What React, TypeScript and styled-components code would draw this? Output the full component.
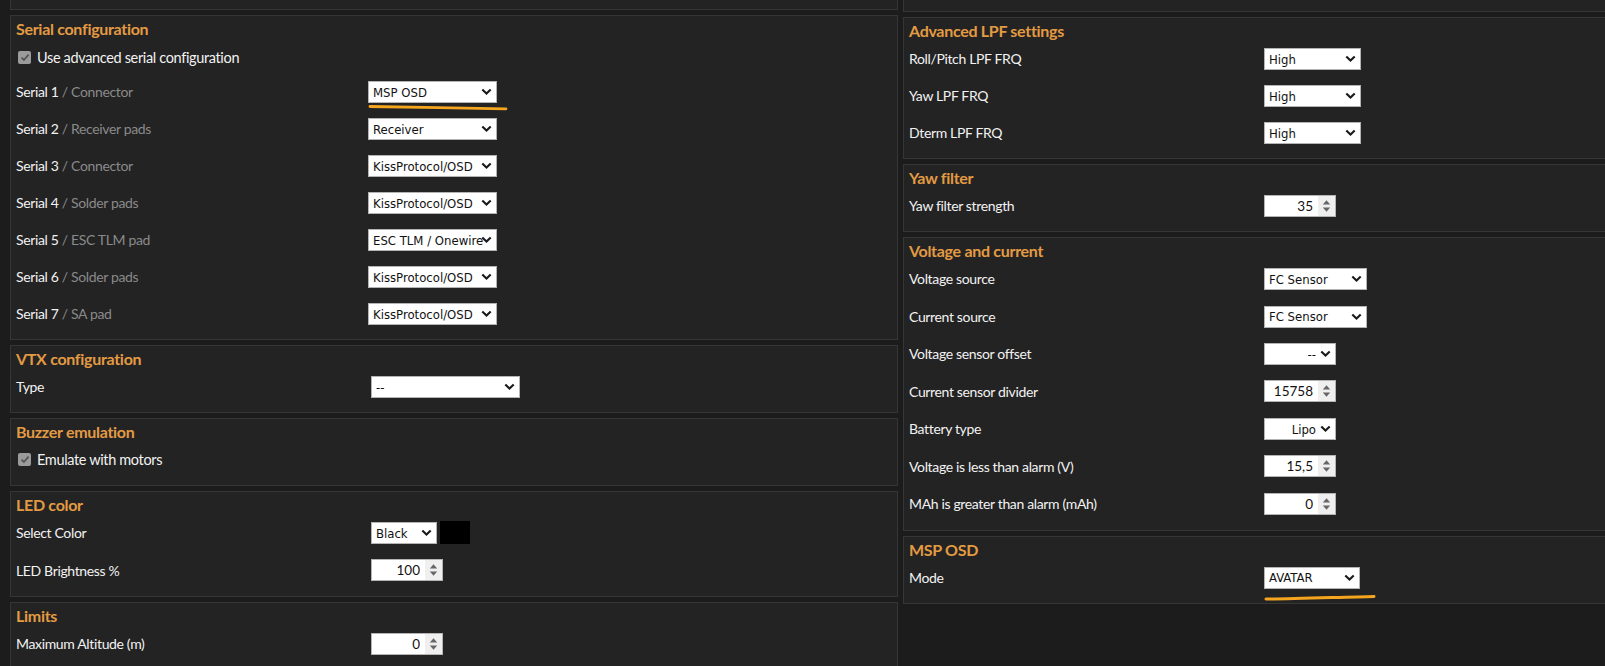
import React from "react";
import styled, { createGlobalStyle } from "styled-components";

const GlobalStyle = createGlobalStyle`
  html, body {
    margin: 0;
    padding: 0;
    background: #1c1c1c;
    overflow: hidden;
  }
  body {
    font-family: Lato, "Noto Sans", sans-serif;
    color: #f2f2f2;
  }
  * { box-sizing: border-box; }
`;

const Page = styled.div`
  display: grid;
  grid-template-columns: 888px 888px;
  column-gap: 5px;
  padding-left: 10px;
  width: 1605px;
  height: 666px;
  overflow: hidden;
  align-items: start;
`;

const Column = styled.div`
  display: flex;
  flex-direction: column;
  gap: 5px;
`;

const Stub = styled.div<{ $h: number }>`
  height: ${(p) => p.$h}px;
  border: 1px solid #363636;
  border-top: none;
  background: #232323;
`;

const Panel = styled.section`
  border: 1px solid #363636;
  background: #232323;
  padding: 4px 5px 7px;
`;

const Title = styled.h3`
  margin: 0;
  font-size: 16px;
  font-weight: 700;
  line-height: 18px;
  letter-spacing: -0.3px;
  color: #e39b43;
`;

const Row = styled.div<{ $h?: number; $label?: number }>`
  display: grid;
  grid-template-columns: ${(p) => p.$label ?? 355}px auto;
  align-items: center;
  height: ${(p) => p.$h ?? 37}px;
`;

const Label = styled.span`
  font-size: 14px;
  letter-spacing: -0.35px;
  color: #f2f2f2;
`;

const Sub = styled.span`
  color: #8a8a8a;
`;

const Controls = styled.div`
  display: flex;
  align-items: center;
  gap: 3px;
`;

const CheckRow = styled.label<{ $h: number; $shift: number }>`
  display: flex;
  align-items: center;
  gap: 6px;
  height: ${(p) => p.$h}px;
  padding-left: 2px;
  padding-top: ${(p) => p.$shift}px;
  font-size: 14.5px;
  letter-spacing: -0.35px;
  color: #f2f2f2;
`;

const CheckBox = styled.span`
  width: 13px;
  height: 13px;
  border-radius: 2px;
  background: #9b9b9b;
  display: inline-flex;
  align-items: center;
  justify-content: center;
`;

const SelectWrap = styled.div<{ $w: number }>`
  position: relative;
  width: ${(p) => p.$w}px;
  height: 22px;
`;

const Select = styled.select<{ $right?: boolean }>`
  appearance: none;
  -webkit-appearance: none;
  width: 100%;
  height: 22px;
  border: 1px solid #b4b4b4;
  border-radius: 0;
  background: #ffffff;
  color: #111;
  font-family: "DejaVu Sans Condensed", Lato, sans-serif;
  font-size: 13px;
  padding: 0 ${(p) => (p.$right ? 19 : 12)}px 0 4px;
  text-align: ${(p) => (p.$right ? "right" : "left")};
  text-align-last: ${(p) => (p.$right ? "right" : "left")};
  outline: none;
`;

const Chevron = styled.svg`
  position: absolute;
  right: 5px;
  top: 7.5px;
  pointer-events: none;
`;

const Underline = styled.svg<{ $top: number }>`
  position: absolute;
  left: 0;
  top: ${(p) => p.$top}px;
  pointer-events: none;
  overflow: visible;
`;

const NumberWrap = styled.div`
  display: flex;
  width: 72px;
  height: 22px;
  border: 1px solid #b4b4b4;
  background: #fff;
`;

const NumberField = styled.input`
  flex: 1;
  min-width: 0;
  border: none;
  outline: none;
  background: transparent;
  text-align: right;
  padding: 0 5px 0 2px;
  font-family: inherit;
  font-size: 13.5px;
  color: #111;
`;

const Spin = styled.div`
  width: 17px;
  background: #efefef;
  display: flex;
  align-items: center;
  justify-content: center;
`;

const Swatch = styled.div`
  width: 30px;
  height: 23px;
  background: #000;
`;

type SelProps = {
  w: number;
  value: string;
  right?: boolean;
  mark?: "a" | "b";
};

const Sel = ({ w, value, right, mark }: SelProps) => (
  <SelectWrap $w={w}>
    <Select $right={right} defaultValue={value}>
      <option value={value}>{value}</option>
    </Select>
    <Chevron width="11" height="8" viewBox="0 0 11 8">
      <path d="M1.3 1.5 L5.5 5.6 L9.7 1.5" fill="none" stroke="#1a1a1a" strokeWidth="2.1" />
    </Chevron>
    {mark === "a" && (
      <Underline $top={23} width="140" height="7" viewBox="0 0 140 7">
        <path d="M2 2.5 C 40 3.5, 100 4, 138 4.8" fill="none" stroke="#f5a51e" strokeWidth="2.8" strokeLinecap="round" />
      </Underline>
    )}
    {mark === "b" && (
      <Underline $top={28} width="112" height="7" viewBox="0 0 112 7">
        <path d="M2 5 C 30 4.8, 80 3, 110 2.4" fill="none" stroke="#f5a51e" strokeWidth="3" strokeLinecap="round" />
      </Underline>
    )}
  </SelectWrap>
);

const Num = ({ value }: { value: string }) => (
  <NumberWrap>
    <NumberField type="text" inputMode="decimal" defaultValue={value} />
    <Spin>
      <svg width="9" height="14" viewBox="0 0 9 14">
        <path d="M4.5 1.2 L8.2 5.6 L0.8 5.6 Z" fill="#666" />
        <path d="M4.5 12.8 L8.2 8.4 L0.8 8.4 Z" fill="#666" />
      </svg>
    </Spin>
  </NumberWrap>
);

const Check = ({ text, h, shift = 0 }: { text: string; h: number; shift?: number }) => (
  <CheckRow $h={h} $shift={shift}>
    <CheckBox>
      <svg width="10" height="9" viewBox="0 0 10 9">
        <path d="M1.5 4.6 L3.9 7 L8.6 1.6" fill="none" stroke="#555" strokeWidth="1.8" />
      </svg>
    </CheckBox>
    {text}
  </CheckRow>
);

const serials: [string, string, string][] = [
  ["Serial 1", "Connector", "MSP OSD"],
  ["Serial 2", "Receiver pads", "Receiver"],
  ["Serial 3", "Connector", "KissProtocol/OSD"],
  ["Serial 4", "Solder pads", "KissProtocol/OSD"],
  ["Serial 5", "ESC TLM pad", "ESC TLM / Onewire"],
  ["Serial 6", "Solder pads", "KissProtocol/OSD"],
  ["Serial 7", "SA pad", "KissProtocol/OSD"],
];

export default function App() {
  return (
    <>
      <GlobalStyle />
      <Page>
        <Column>
          <Stub $h={10} />
          <Panel>
            <Title>Serial configuration</Title>
            <Check text="Use advanced serial configuration" h={35} shift={4} />
            {serials.map(([a, b, v], i) => (
              <Row key={a} $label={352}>
                <Label>
                  {a} <Sub>/ {b}</Sub>
                </Label>
                <Controls>
                  <Sel w={129} value={v} mark={i === 0 ? "a" : undefined} />
                </Controls>
              </Row>
            ))}
          </Panel>
          <Panel>
            <Title>VTX configuration</Title>
            <Row>
              <Label>Type</Label>
              <Controls>
                <Sel w={149} value="--" />
              </Controls>
            </Row>
          </Panel>
          <Panel>
            <Title>Buzzer emulation</Title>
            <Check text="Emulate with motors" h={37} />
          </Panel>
          <Panel>
            <Title>LED color</Title>
            <Row $h={37.5}>
              <Label>Select Color</Label>
              <Controls>
                <Sel w={66} value="Black" />
                <Swatch />
              </Controls>
            </Row>
            <Row $h={37.5}>
              <Label>LED Brightness %</Label>
              <Controls>
                <Num value="100" />
              </Controls>
            </Row>
          </Panel>
          <Panel>
            <Title>Limits</Title>
            <Row>
              <Label>Maximum Altitude (m)</Label>
              <Controls>
                <Num value="0" />
              </Controls>
            </Row>
          </Panel>
        </Column>
        <Column>
          <Stub $h={12} />
          <Panel>
            <Title>Advanced LPF settings</Title>
            {["Roll/Pitch LPF FRQ", "Yaw LPF FRQ", "Dterm LPF FRQ"].map((l) => (
              <Row key={l}>
                <Label>{l}</Label>
                <Controls>
                  <Sel w={97} value="High" />
                </Controls>
              </Row>
            ))}
          </Panel>
          <Panel>
            <Title>Yaw filter</Title>
            <Row>
              <Label>Yaw filter strength</Label>
              <Controls>
                <Num value="35" />
              </Controls>
            </Row>
          </Panel>
          <Panel>
            <Title>Voltage and current</Title>
            <Row $h={37.5}>
              <Label>Voltage source</Label>
              <Controls>
                <Sel w={103} value="FC Sensor" />
              </Controls>
            </Row>
            <Row $h={37.5}>
              <Label>Current source</Label>
              <Controls>
                <Sel w={103} value="FC Sensor" />
              </Controls>
            </Row>
            <Row $h={37.5}>
              <Label>Voltage sensor offset</Label>
              <Controls>
                <Sel w={72} value="--" right />
              </Controls>
            </Row>
            <Row $h={37.5}>
              <Label>Current sensor divider</Label>
              <Controls>
                <Num value="15758" />
              </Controls>
            </Row>
            <Row $h={37.5}>
              <Label>Battery type</Label>
              <Controls>
                <Sel w={72} value="Lipo" right />
              </Controls>
            </Row>
            <Row $h={37.5}>
              <Label>Voltage is less than alarm (V)</Label>
              <Controls>
                <Num value="15,5" />
              </Controls>
            </Row>
            <Row $h={37.5}>
              <Label>MAh is greater than alarm (mAh)</Label>
              <Controls>
                <Num value="0" />
              </Controls>
            </Row>
          </Panel>
          <Panel>
            <Title>MSP OSD</Title>
            <Row>
              <Label>Mode</Label>
              <Controls>
                <Sel w={96} value="AVATAR" mark="b" />
              </Controls>
            </Row>
          </Panel>
        </Column>
      </Page>
    </>
  );
}
